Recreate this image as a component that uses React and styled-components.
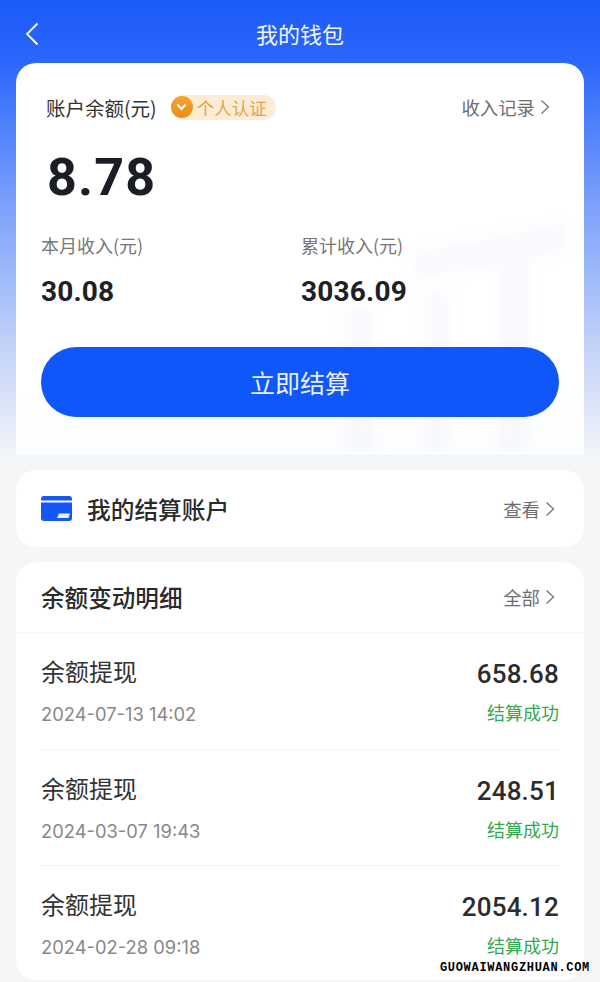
import styled, { createGlobalStyle } from "styled-components";

const GlobalStyle = createGlobalStyle`
    html, body {
        margin: 0;
        padding: 0;
        background: #f4f6f8;
    }
    * {
        box-sizing: border-box;
    }
`;

const FONT = `"Noto Sans CJK SC", "Noto Sans", sans-serif`;
const NUM = `Roboto, "Noto Sans CJK SC", sans-serif`;

const records = [
    { amount: "658.68", time: "2024-07-13 14:02" },
    { amount: "248.51", time: "2024-03-07 19:43" },
    { amount: "2054.12", time: "2024-02-28 09:18" },
];

function Chevron({ size = 16, color = "#777" }) {
    return (
        <svg width={size * 0.625} height={size} viewBox="0 0 10 16" fill="none">
            <path d="M1.5 1.5L8.5 8L1.5 14.5" stroke={color} strokeWidth="1.3" />
        </svg>
    );
}

function App() {
    return (
        <Page>
            <GlobalStyle />
            <Header>
                <BackButton>
                    <svg width="14" height="24" viewBox="0 0 14 24" fill="none">
                        <path d="M12.5 1.5L2 12L12.5 22.5" stroke="#fff" strokeWidth="1.8" />
                    </svg>
                </BackButton>
                <HeaderTitle>我的钱包</HeaderTitle>
            </Header>

            <BalanceCard>
                <CardMark viewBox="0 0 240 230" fill="#e6ecf9">
                    <path d="M70 30L220 0V30L70 55Z" />
                    <path d="M0 85H30V230H0Z" />
                    <path d="M80 70H105V230H80Z" />
                    <path d="M155 30H185V230H155Z" />
                </CardMark>
                <BalanceTop>
                    <BalanceLabel>账户余额(元)</BalanceLabel>
                    <Badge>
                        <BadgeIcon>
                            <svg width="11" height="8" viewBox="0 0 11 8" fill="none">
                                <path d="M1.5 1.5L5.5 6L9.5 1.5" stroke="#fff" strokeWidth="2" />
                            </svg>
                        </BadgeIcon>
                        <BadgeText>个人认证</BadgeText>
                    </Badge>
                    <LinkText $right="34px">
                        收入记录
                        <Chevron />
                    </LinkText>
                </BalanceTop>
                <BalanceValue>8.78</BalanceValue>
                <Stats>
                    <Stat>
                        <StatLabel>本月收入(元)</StatLabel>
                        <StatValue>30.08</StatValue>
                    </Stat>
                    <Stat>
                        <StatLabel>累计收入(元)</StatLabel>
                        <StatValue>3036.09</StatValue>
                    </Stat>
                </Stats>
                <SettleButton>立即结算</SettleButton>
            </BalanceCard>

            <AccountCard>
                <AccountLeft>
                    <svg width="31" height="25" viewBox="0 0 31 25">
                        <path
                            d="M3 0H28A3 3 0 0 1 31 3V4.5H0V3A3 3 0 0 1 3 0ZM0 6.5H31V22A3 3 0 0 1 28 25H3A3 3 0 0 1 0 22Z"
                            fill="#1557f5"
                        />
                        <path d="M18 17.5H29L27.5 22H16Z" fill="#e8effe" />
                    </svg>
                    <AccountTitle>我的结算账户</AccountTitle>
                </AccountLeft>
                <LinkText>
                    查看
                    <Chevron />
                </LinkText>
            </AccountCard>

            <DetailCard>
                <DetailHead>
                    <DetailTitle>余额变动明细</DetailTitle>
                    <LinkText>
                        全部
                        <Chevron />
                    </LinkText>
                </DetailHead>
                {records.map((item, index) => (
                    <Record key={index} $last={index === records.length - 1}>
                        <RecordLeft>
                            <RecordName>余额提现</RecordName>
                            <RecordTime>{item.time}</RecordTime>
                        </RecordLeft>
                        <RecordRight>
                            <RecordAmount>{item.amount}</RecordAmount>
                            <RecordStatus>结算成功</RecordStatus>
                        </RecordRight>
                    </Record>
                ))}
            </DetailCard>

            <Watermark>GUOWAIWANGZHUAN.COM</Watermark>
        </Page>
    );
}

export default App;

const Page = styled.div`
    position: relative;
    width: 600px;
    height: 982px;
    overflow: hidden;
    padding: 0 16px;
    font-family: ${FONT};
    background: linear-gradient(
        180deg,
        #1c5af8 0,
        #2a66fb 60px,
        #7fa3fb 210px,
        #c4d4f8 350px,
        #f4f6f8 460px
    );
`;

const Header = styled.div`
    position: relative;
    height: 63px;
    display: flex;
    align-items: center;
    justify-content: center;
    padding-top: 3px;
`;

const BackButton = styled.div`
    position: absolute;
    left: 9px;
    top: 22px;
    line-height: 0;
`;

const HeaderTitle = styled.div`
    font-size: 22px;
    line-height: 30px;
    color: #f2f6ff;
`;

const BalanceCard = styled.div`
    position: relative;
    height: 392px;
    padding: 30px 25px 0;
    border-radius: 20px 20px 0 0;
    overflow: hidden;
    background: linear-gradient(180deg, #fff 0, #fff 85%, #fcfdfe 100%);
`;

const CardMark = styled.svg`
    position: absolute;
    right: 0;
    top: 160px;
    width: 240px;
    height: 230px;
    opacity: 0.28;
    filter: blur(6px);
`;

const BalanceTop = styled.div`
    position: relative;
    display: flex;
    align-items: center;
    height: 28px;
    padding-left: 5px;
`;

const BalanceLabel = styled.div`
    font-size: 19.5px;
    color: #333;
`;

const Badge = styled.div`
    display: flex;
    align-items: center;
    height: 25px;
    width: 105px;
    margin-left: 14px;
    border-radius: 13px;
    background: #fdecd4;
`;

const BadgeIcon = styled.div`
    display: flex;
    align-items: center;
    justify-content: center;
    width: 22px;
    height: 22px;
    border-radius: 50%;
    background: linear-gradient(180deg, #f4a52e, #ec8c1a);
`;

const BadgeText = styled.div`
    margin-left: 4px;
    font-size: 17.5px;
    line-height: 25px;
    color: #e3a44e;
`;

const LinkText = styled.div`
    display: flex;
    align-items: center;
    gap: 5px;
    font-size: 18.4px;
    color: #6e6e6e;
    ${({ $right }) => $right && `margin-left: auto; margin-right: 9px;`}
`;

const BalanceValue = styled.div`
    position: relative;
    margin: 25px 0 0 6px;
    font-family: ${NUM};
    font-size: 52px;
    line-height: 64px;
    font-weight: 700;
    letter-spacing: 1.2px;
    color: #1b1e25;
`;

const Stats = styled.div`
    position: relative;
    display: grid;
    grid-template-columns: 260px 1fr;
    margin-top: 22px;
`;

const Stat = styled.div`
    display: flex;
    flex-direction: column;
`;

const StatLabel = styled.div`
    font-size: 18px;
    line-height: 26px;
    color: #777;
`;

const StatValue = styled.div`
    margin-top: 16px;
    font-family: ${NUM};
    font-size: 28px;
    line-height: 36px;
    font-weight: 700;
    letter-spacing: 0.2px;
    color: #1d2026;
`;

const SettleButton = styled.div`
    position: relative;
    display: flex;
    align-items: center;
    justify-content: center;
    height: 70px;
    margin-top: 37px;
    border-radius: 35px;
    background: #0f57f8;
    color: #eaf0ff;
    font-size: 25px;
`;

const AccountCard = styled.div`
    display: flex;
    align-items: center;
    justify-content: space-between;
    height: 77px;
    margin-top: 15px;
    padding: 0 29px 0 25px;
    border-radius: 20px;
    background: #fff;
`;

const AccountLeft = styled.div`
    display: flex;
    align-items: center;
    gap: 15px;
`;

const AccountTitle = styled.div`
    font-size: 23.7px;
    font-weight: 500;
    color: #2a2a2a;
`;

const DetailCard = styled.div`
    height: 418px;
    margin-top: 15px;
    padding: 0 25px;
    border-radius: 20px;
    background: #fff;
`;

const DetailHead = styled.div`
    display: flex;
    align-items: center;
    justify-content: space-between;
    height: 71px;
    margin: 0 -25px;
    padding: 0 29px 0 25px;
    border-bottom: 1px solid #f8f8f9;
`;

const DetailTitle = styled.div`
    font-size: 23.6px;
    font-weight: 500;
    color: #2a2a2a;
`;

const Record = styled.div`
    display: flex;
    justify-content: space-between;
    height: 116.5px;
    padding-top: 21px;
    border-bottom: ${({ $last }) => ($last ? "none" : "1px solid #f2f3f5")};
`;

const RecordLeft = styled.div`
    display: flex;
    flex-direction: column;
`;

const RecordName = styled.div`
    font-size: 24px;
    line-height: 34px;
    color: #333;
`;

const RecordTime = styled.div`
    margin-top: 14px;
    font-family: Inter, sans-serif;
    font-size: 18.35px;
    line-height: 24px;
    color: #888;
`;

const RecordRight = styled.div`
    display: flex;
    flex-direction: column;
    align-items: flex-end;
    padding-top: 3px;
`;

const RecordAmount = styled.div`
    font-family: ${NUM};
    font-size: 26px;
    line-height: 34px;
    font-weight: 500;
    letter-spacing: 0.2px;
    color: #2c2c2f;
`;

const RecordStatus = styled.div`
    margin-top: 8px;
    font-size: 18px;
    line-height: 26px;
    color: #35a84f;
`;

const Watermark = styled.div`
    position: absolute;
    right: 10px;
    top: 961px;
    font-family: "Liberation Mono", monospace;
    font-size: 12px;
    line-height: 14px;
    font-weight: 700;
    letter-spacing: 0.7px;
    color: #000;
    text-shadow: 1px 0 0 #fff, -1px 0 0 #fff, 0 1px 0 #fff, 0 -1px 0 #fff;
`;
